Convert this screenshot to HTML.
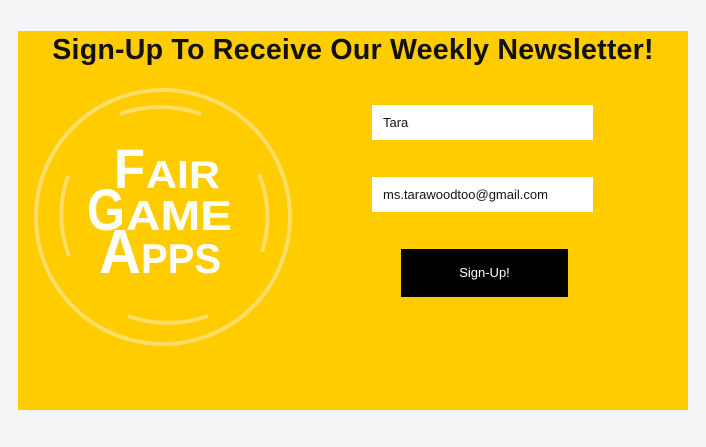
<!DOCTYPE html>
<html><head><style>
body{margin:0;width:706px;height:447px;background:#f4f5f7;font-family:"Liberation Sans",sans-serif;position:relative;overflow:hidden}
.panel{position:absolute;left:18px;top:31px;width:670px;height:379px;background:#ffcc00}
h1{position:absolute;left:18px;width:670px;top:34px;margin:0;text-align:center;font-size:28.6px;font-weight:bold;color:#111;letter-spacing:0.2px}
.in{position:absolute;left:372px;width:210px;height:35px;background:#fff;padding-left:11px;font-size:13px;line-height:35px;color:#111}
.btn{position:absolute;left:401px;top:249px;width:167px;height:48px;background:#000;color:#fff;font-size:13px;text-align:center;line-height:48px}
</style></head><body>
<div class="panel"></div>
<h1>Sign-Up To Receive Our Weekly Newsletter!</h1>
<svg style="position:absolute;left:0;top:0" width="706" height="447">
<g fill="none" stroke="#ffe07a" stroke-width="4" opacity="0.85">
<circle cx="163" cy="217" r="127"/>
<path d="M120 114 A120 120 0 0 1 201 114"/>
<path d="M128 316 A120 120 0 0 0 208 316"/>
<path d="M68 176 A115 115 0 0 0 69 256"/>
<path d="M259 174 A115 115 0 0 1 262 252"/>
</g>
<g fill="#fff" font-family="Liberation Sans,sans-serif" font-weight="bold">
<text x="114" y="188" font-size="56" textLength="31" lengthAdjust="spacingAndGlyphs">F</text>
<text x="146" y="188" font-size="39" textLength="74" lengthAdjust="spacingAndGlyphs">AIR</text>
<text x="87" y="230" font-size="58" textLength="38" lengthAdjust="spacingAndGlyphs">G</text>
<text x="126" y="230" font-size="42" textLength="106" lengthAdjust="spacingAndGlyphs">AME</text>
<text x="99" y="273" font-size="62" textLength="42" lengthAdjust="spacingAndGlyphs">A</text>
<text x="141" y="273" font-size="42" textLength="80" lengthAdjust="spacingAndGlyphs">PPS</text>
</g>
</svg>
<div class="in" style="top:105px">Tara</div>
<div class="in" style="top:177px">ms.tarawoodtoo@gmail.com</div>
<div class="btn">Sign-Up!</div>
</body></html>
